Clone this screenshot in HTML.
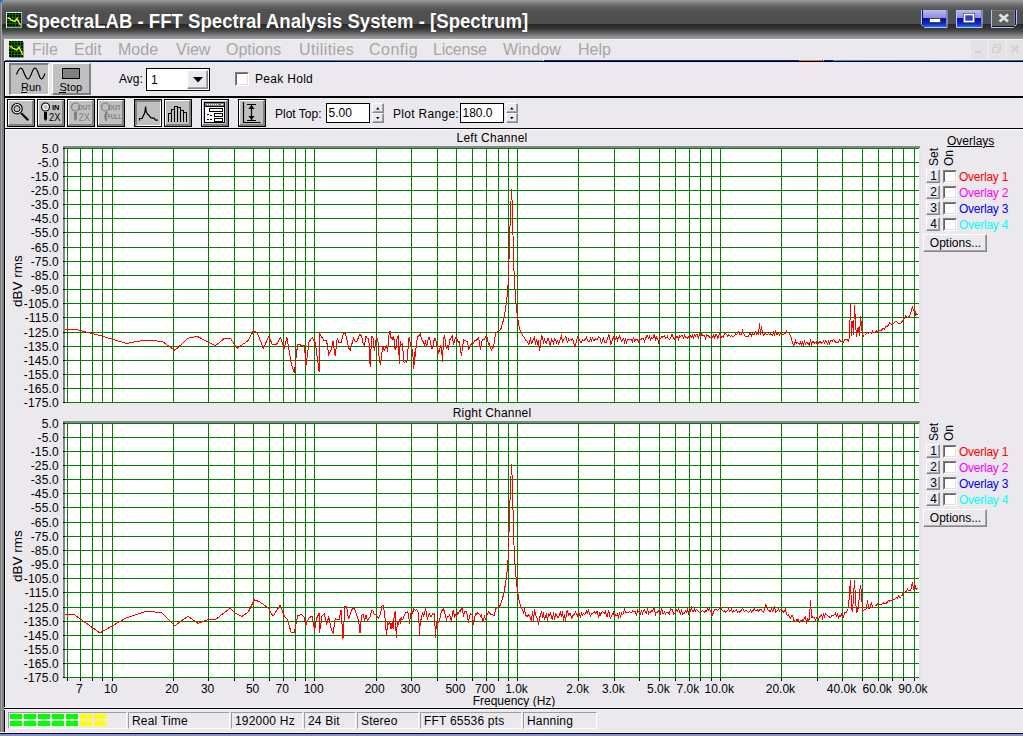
<!DOCTYPE html>
<html><head><meta charset="utf-8"><title>SpectraLAB - FFT Spectral Analysis System - [Spectrum]</title>
<style>
html,body{margin:0;padding:0}
body{width:1023px;height:736px;overflow:hidden;position:relative;background:#ebe9ed;font-family:"Liberation Sans",sans-serif;font-size:12px;color:#000;line-height:14px}
.a{position:absolute}
div,i{box-sizing:border-box}
i{display:block}
#title{left:0;top:0;width:1023px;height:39px;background:linear-gradient(to bottom,#9c9c9c 0px,#8a8a8a 2px,#6c6c6c 5px,#585858 9px,#505050 12px,#505050 24px,#272727 24px,#2c2c2c 26px,#3a3a3a 29px,#555 32px,#7a7a7a 35px,#a2a2a2 39px)}
#ttext{left:26px;top:9px;font:bold 20px/24px "Liberation Sans",sans-serif;color:#fff;white-space:nowrap;transform-origin:0 0;transform:scaleX(.929);text-shadow:0 0 1px rgba(0,0,0,.5)}
#lb0{left:0;top:0;width:1px;height:734px;background:#7c7c7c}
#lb1{left:1px;top:0;width:1px;height:734px;background:#a6a6a6}
#lb2{left:2px;top:39px;width:2px;height:695px;background:#808080}
#menu{left:4px;top:39px;width:1019px;height:21px;background:#ebe9ed;border-top:1px solid #f6f6f9;border-left:1px solid #f6f6f9}
.mi{position:absolute;top:40px;font:16px/20px "Liberation Sans",sans-serif;color:#a6a6a8;white-space:nowrap}
.hl{position:absolute;left:4px;width:1019px}
.yl{position:absolute;left:7px;width:52px;text-align:right;height:14px;line-height:14px;white-space:nowrap;letter-spacing:.2px}
.xl{position:absolute;top:682px;width:60px;text-align:center;height:14px;line-height:14px;white-space:nowrap}
.tb{position:absolute;top:99px;width:28px;height:28px;background:#c0c0c0;border:1px solid #000}
.tb i{position:absolute;left:0;top:0;width:26px;height:26px;border-top:1px solid #fff;border-left:1px solid #fff;border-right:2px solid #808080;border-bottom:2px solid #808080}
.tb.dn i{border-top:2px solid #808080;border-left:2px solid #808080;border-right:1px solid #fff;border-bottom:1px solid #fff}
.tb svg{position:absolute;left:-1px;top:-1px}
.sb{position:absolute;top:712px;height:17px;border-top:1px solid #9d9da1;border-left:1px solid #9d9da1;border-right:1px solid #fff;border-bottom:1px solid #fff;line-height:17px;padding-left:3px;white-space:nowrap;letter-spacing:.2px}
.btn{position:absolute;background:#ebe9ed;border-top:1px solid #fff;border-left:1px solid #fff;border-right:1px solid #85878b;border-bottom:1px solid #85878b;box-shadow:inset -1px -1px 0 #a9a9ad;text-align:center;white-space:nowrap}
.cb{position:absolute;width:14px;height:14px;background:#fff;border-top:1px solid #808080;border-left:1px solid #808080;border-right:1px solid #fff;border-bottom:1px solid #fff}
.cb i{position:absolute;left:0;top:0;width:12px;height:12px;border-top:1px solid #606060;border-left:1px solid #606060;border-right:1px solid #e0e0e0;border-bottom:1px solid #e0e0e0}
.ol{position:absolute;left:959px;white-space:nowrap;letter-spacing:-.25px}
.rot{position:absolute;transform-origin:0 0;transform:rotate(-90deg);white-space:nowrap}
</style></head><body>
<!-- title bar -->
<div id="title" class="a"></div>
<div id="lb0" class="a"></div><div id="lb1" class="a"></div><div id="lb2" class="a"></div>
<svg class="a" style="left:0;top:0" width="6" height="6"><path d="M0 0h3.500L0 3.500z" fill="#1e6fd8"/></svg>
<svg class="a" style="left:6px;top:12px" width="16" height="16" viewBox="0 0 16 16" shape-rendering="crispEdges"><rect width="16" height="16" fill="#e4e4e4"/><rect x="1" y="1" width="15" height="15" fill="#a4a4a4"/><rect x="1" y="1" width="14" height="14" fill="#000"/><path d="M3.500 1v14M6.500 1v14M9.500 1v14M12.500 1v14M1 2.500h14M1 5.500h14M1 8.500h14M1 11.500h14M1 14.500h14" stroke="#006c00" stroke-width="1"/><path d="M1.500 6L4 6.500L5 8L7 8.500L8.500 9.500L10 8L11 6.500L12 9L13.500 11L14.500 13.500" stroke="#ffff00" stroke-width="1.300" fill="none" shape-rendering="auto"/></svg>
<div id="ttext" class="a">SpectraLAB - FFT Spectral Analysis System - [Spectrum]</div>
<!-- caption buttons -->
<svg class="a" style="left:918px;top:8px" width="105" height="22" viewBox="918 8 105 22">
<defs><linearGradient id="gb" x1="0" y1="0" x2="0" y2="1"><stop offset="0" stop-color="#bcbcf0"/><stop offset=".47" stop-color="#8c8ce0"/><stop offset=".48" stop-color="#0c0ca8"/><stop offset=".8" stop-color="#1428c0"/><stop offset="1" stop-color="#1a74ee"/></linearGradient></defs>
<path d="M921.5 10v14.5l3 3h22.5v-17.5" fill="none" stroke="#a8c8ff" stroke-width="1"/>
<rect x="923" y="10" width="23" height="17" fill="url(#gb)"/><rect x="922" y="10" width="1" height="15" fill="#10106a"/>
<rect x="929.5" y="18.500" width="11" height="4" fill="#fff" stroke="#444" stroke-width="1"/>
<path d="M956.5 10v17.500h25.500v-17.5" fill="none" stroke="#a8c8ff" stroke-width="1"/>
<rect x="957" y="10" width="24" height="17" fill="url(#gb)"/>
<rect x="963.5" y="13.500" width="11" height="9" fill="#2a3cc8" stroke="#444" stroke-width="1"/><rect x="964.5" y="14.500" width="9" height="7" fill="none" stroke="#fff" stroke-width="1.6"/>
<path d="M991.5 10v17.500h22l3-3v-14.500" fill="none" stroke="#a8c8ff" stroke-width="1"/>
<rect x="992" y="10" width="23" height="17" fill="#626262"/><rect x="992" y="10" width="23" height="1" fill="#7a7a7a"/><rect x="1014" y="10" width="1" height="16" fill="#808080"/><rect x="1015" y="10" width="1" height="15" fill="#10105a"/><rect x="992" y="26" width="22" height="1" fill="#101010"/>
<path d="M999.500 14.500l8.500 7M1008 14.500l-8.500 7" stroke="#e2e2e2" stroke-width="2.700"/>
</svg>
<!-- menu -->
<div id="menu" class="a"></div>
<svg class="a" style="left:9px;top:41px" width="15" height="17" viewBox="0 0 15 17" shape-rendering="crispEdges"><rect x="1" y="1" width="14" height="16" fill="#909090"/><rect width="14" height="16" fill="#000"/><path d="M2.500 0v16M5.500 0v16M8.500 0v16M11.500 0v16M0 1.500h14M0 4.500h14M0 7.500h14M0 10.500h14M0 13.500h14" stroke="#006c00" stroke-width="1"/><path d="M0.500 5.500L3 6L4 7.500L6 8L7.500 9L9 7.500L10 6L11 8.500L12.500 10.500L13.500 14" stroke="#ffff00" stroke-width="1.300" fill="none" shape-rendering="auto"/></svg>
<div class="mi" style="left:32px">File</div><div class="mi" style="left:74px">Edit</div><div class="mi" style="left:118px">Mode</div><div class="mi" style="left:176px">View</div><div class="mi" style="left:226px">Options</div><div class="mi" style="left:299px;letter-spacing:.4px">Utilities</div><div class="mi" style="left:369px;letter-spacing:.5px">Config</div><div class="mi" style="left:433px;letter-spacing:-.2px">License</div><div class="mi" style="left:503px;letter-spacing:.2px">Window</div><div class="mi" style="left:578px">Help</div>
<!-- mdi buttons -->
<div class="a" style="left:971px;top:40px;width:16px;height:19px;background:#e3e2e6"></div><div class="a" style="left:989px;top:40px;width:16px;height:19px;background:#e3e2e6"></div><div class="a" style="left:1007px;top:40px;width:16px;height:19px;background:#e3e2e6"></div>
<svg class="a" style="left:971px;top:41px" width="52" height="18" viewBox="971 41 52 18"><rect x="975" y="51" width="6" height="2" fill="#d2d1c4"/><path d="M992.500 47.500h6v5h-6zM994.500 47v-2.500h6v5h-2" fill="none" stroke="#d2d1c4" stroke-width="1.200"/><path d="M1011.500 45.500l7 7M1018.500 45.500l-7 7" stroke="#d2d1c4" stroke-width="1.800"/></svg>
<div class="a" style="left:5px;top:60px;width:538px;height:1px;background:linear-gradient(to right,#1c64c4,#2a7cd4 60%,#4aa0e6)"></div><div class="a" style="left:543px;top:60px;width:1px;height:1px;background:#f0f0f4"></div><div class="a" style="left:544px;top:60px;width:255px;height:1px;background:#16269a"></div><div class="a" style="left:799px;top:60px;width:23px;height:1px;background:#e8705e"></div><div class="a" style="left:822px;top:60px;width:1px;height:1px;background:#101040"></div><div class="a" style="left:823px;top:60px;width:1px;height:1px;background:#e8e8f0"></div><div class="a" style="left:824px;top:60px;width:10px;height:1px;background:#16269a"></div><div class="a" style="left:834px;top:60px;width:1px;height:1px;background:#d8d8f0"></div><div class="a" style="left:835px;top:60px;width:188px;height:1px;background:linear-gradient(to right,#3a90e0,#1c6cd0)"></div>
<div class="hl" style="top:61px;height:1px;background:#000"></div>
<!-- toolbar 1 -->
<div class="a" style="left:4px;top:61px;width:1px;height:673px;background:#000"></div><div class="a" style="left:5px;top:62px;width:1px;height:34px;background:#fff"></div><div class="a" style="left:5px;top:98px;width:1px;height:30px;background:#fff"></div>
<div class="a" style="left:9px;top:63px;width:40px;height:32px;background:#c0c0c0;border-top:2px solid #808080;border-left:2px solid #808080;border-right:1px solid #fff;border-bottom:1px solid #fff"></div>
<div class="a" style="left:52px;top:63px;width:39px;height:32px;background:#c0c0c0;border-top:1px solid #fff;border-left:1px solid #fff;border-right:2px solid #808080;border-bottom:2px solid #808080"></div>
<svg class="a" style="left:9px;top:63px" width="82" height="32" viewBox="9 63 82 32"><path d="M16.500 74.500C18 70.500 19.500 68.200 21 68.200C23.500 68.200 25 79 28 79C31 79 32 68.200 35 68.200C38 68.200 39 79 41.500 79C43 79 44 76 45 73.500" fill="none" stroke="#000" stroke-width="1.200"/><rect x="62.500" y="68.500" width="17" height="10" fill="#808080" stroke="#000" stroke-width="1"/><rect x="21" y="92" width="6" height="1" fill="#000" shape-rendering="crispEdges"/><rect x="59" y="92" width="7" height="1" fill="#000" shape-rendering="crispEdges"/></svg>
<div class="a" style="left:21px;top:80px;line-height:14px;font-size:11px">Run</div><div class="a" style="left:59.500px;top:80px;line-height:14px;font-size:11px">Stop</div>
<div class="a" style="left:119px;top:72px">Avg:</div>
<div class="a" style="left:146px;top:68px;width:64px;height:23px;background:#fff;border:1px solid #000"></div>
<div class="a" style="left:151px;top:73px">1</div>
<div class="btn" style="left:187px;top:70px;width:21px;height:19px"></div>
<svg class="a" style="left:192px;top:76px" width="12" height="8"><path d="M1 1h10l-5 5.500z" fill="#000"/></svg>
<div class="cb" style="left:235px;top:72px"><i></i></div>
<div class="a" style="left:255px;top:72px;letter-spacing:.3px">Peak Hold</div>
<div class="hl" style="top:96px;height:2px;background:#000"></div>
<!-- toolbar 2 -->
<div class="tb" style="left:7px"><i></i><svg width="28" height="28" viewBox="0 0 28 28"><circle cx="10" cy="9.700" r="5.200" fill="#fff" stroke="#000" stroke-width="1.200"/><circle cx="10" cy="9.700" r="3.100" fill="#c0c0c0" stroke="#000" stroke-width="1"/><path d="M14.300 14.300l7 7" stroke="#000" stroke-width="2.200"/></svg></div>
<div class="tb" style="left:37px"><i></i><svg width="28" height="28" viewBox="0 0 28 28"><circle cx="8.500" cy="8" r="4" fill="#fff" stroke="#000" stroke-width="1.200"/><circle cx="8.500" cy="8" r="2.300" fill="#c0c0c0"/><path d="M7 13h3v7l-1.500 2l-1.500-2z" fill="#000"/><text x="15" y="11" font-family="Liberation Sans,sans-serif" font-size="7.500" font-weight="bold" fill="#000">IN</text><text x="12" y="22" font-family="Liberation Sans,sans-serif" font-size="11.500" fill="#000" textLength="11.500" lengthAdjust="spacingAndGlyphs">2X</text></svg></div>
<div class="tb" style="left:67px"><i></i><svg width="28" height="28" viewBox="0 0 28 28"><circle cx="8.500" cy="8" r="4" fill="none" stroke="#808080" stroke-width="1.200"/><path d="M7 13h3v7l-1.500 2l-1.500-2z" fill="#808080"/><text x="11" y="11" font-family="Liberation Sans,sans-serif" font-size="7.500" font-weight="bold" fill="#808080" textLength="13" lengthAdjust="spacingAndGlyphs">OUT</text><text x="11.500" y="22" font-family="Liberation Sans,sans-serif" font-size="11.500" fill="#808080" textLength="11.500" lengthAdjust="spacingAndGlyphs">2X</text></svg></div>
<div class="tb" style="left:97px"><i></i><svg width="28" height="28" viewBox="0 0 28 28"><circle cx="8.500" cy="8" r="4" fill="none" stroke="#808080" stroke-width="1.200"/><path d="M9.500 12.500c-2 2-2.500 5-1 9l1.500 0c-1-3-1-6 .5-8z" fill="#808080" stroke="#808080" stroke-width=".8"/><text x="11" y="11" font-family="Liberation Sans,sans-serif" font-size="7.500" font-weight="bold" fill="#808080" textLength="13" lengthAdjust="spacingAndGlyphs">OUT</text><text x="10.500" y="19.500" font-family="Liberation Sans,sans-serif" font-size="7" font-weight="bold" fill="#808080" textLength="14" lengthAdjust="spacingAndGlyphs">FULL</text></svg></div>
<div class="tb dn" style="left:134px"><i></i><svg width="28" height="28" viewBox="0 0 28 28"><path d="M5.500 21.500v-2h2.500l1-2l1.200-2.500l.8-2.500l.6-5l.4 4.500l1 2.500l1.800 1.700l2 2.500l3.500.7l1.400 1.700h2.300" fill="none" stroke="#000" stroke-width="1.200"/></svg></div>
<div class="tb" style="left:164px"><i></i><svg width="28" height="28" viewBox="0 0 28 28" shape-rendering="crispEdges"><path d="M4.500 23v-9h3v9M7.500 14v-4h3v13M10.500 10v-3h3v16M13.500 8h3v15M16.500 11h3v12M19.500 13h3v10" fill="none" stroke="#000" stroke-width="1"/></svg></div>
<div class="tb" style="left:201px"><i></i><svg width="28" height="28" viewBox="0 0 28 28" shape-rendering="crispEdges"><rect x="3.500" y="3.500" width="20" height="20" fill="#fff" stroke="#000" stroke-width="1"/><rect x="4" y="4" width="19" height="3" fill="#808080"/><path d="M6 5.500h12" stroke="#fff" stroke-width="1" stroke-dasharray="1 1"/><rect x="20" y="5" width="2" height="1" fill="#fff"/><rect x="4" y="7" width="19" height="1" fill="#000"/><rect x="8.500" y="9.500" width="13" height="3" fill="#fff" stroke="#000"/><rect x="13.500" y="14.500" width="8" height="3" fill="#fff" stroke="#000"/><rect x="13.500" y="19.500" width="8" height="3" fill="#fff" stroke="#000"/><path d="M6 15.500h2M9 16.500h2M6 20.500h2M9 20.500h2" stroke="#000"/></svg></div>
<div class="tb" style="left:238px"><i></i><svg width="28" height="28" viewBox="0 0 28 28"><path d="M5.500 3v20.500h17" fill="none" stroke="#000" stroke-width="1.200"/><path d="M9 5.500h9M9 21.500h9M13.500 6v15" stroke="#000" stroke-width="1.200" fill="none"/><path d="M13.500 6l-3 4h6zM13.500 21l-3-4h6z" fill="#000"/></svg></div>
<div class="a" style="left:275px;top:107px">Plot Top:</div>
<div class="a" style="left:326px;top:103px;width:44px;height:20px;background:#fff;border:1px solid #000"></div><div class="a" style="left:328.500px;top:106px">5.00</div>
<div class="btn" style="left:372px;top:103px;width:12px;height:10px"></div><div class="btn" style="left:372px;top:113px;width:12px;height:10px"></div>
<svg class="a" style="left:372px;top:103px" width="12" height="20"><path d="M4 6.500h3.600l-1.800-2.200zM4 14h3.600l-1.800 2.200z" fill="#000"/></svg>
<div class="a" style="left:393px;top:107px;letter-spacing:.3px">Plot Range:</div>
<div class="a" style="left:460px;top:103px;width:44px;height:20px;background:#fff;border:1px solid #000"></div><div class="a" style="left:462.500px;top:106px">180.0</div>
<div class="btn" style="left:506px;top:103px;width:12px;height:10px"></div><div class="btn" style="left:506px;top:113px;width:12px;height:10px"></div>
<svg class="a" style="left:506px;top:103px" width="12" height="20"><path d="M4 6.500h3.600l-1.800-2.200zM4 14h3.600l-1.800 2.200z" fill="#000"/></svg>
<div class="hl" style="top:128px;height:1px;background:#000"></div><div class="hl" style="top:129px;height:1px;background:#fbfbfd;left:5px"></div><div class="a" style="left:5px;top:129px;width:1px;height:578px;background:#f6f6f9"></div>
<!-- plots -->
<svg class="plots" width="1023" height="736" viewBox="0 0 1023 736" style="position:absolute;left:0;top:0" shape-rendering="crispEdges"><rect x="65" y="148" width="854" height="255" fill="#fff"/><rect x="919" y="148" width="2" height="257" fill="#e4e3e7"/><rect x="65" y="403" width="854" height="2" fill="#ece6ee"/><rect x="63" y="146" width="857" height="2" fill="#868686"/><rect x="63" y="146" width="2" height="257" fill="#868686"/><path d="M67 148h1v255h-1zM80 148h1v255h-1zM92 148h1v255h-1zM102 148h1v255h-1zM112 148h1v255h-1zM173 148h1v255h-1zM208 148h1v255h-1zM234 148h1v255h-1zM253 148h1v255h-1zM269 148h1v255h-1zM283 148h1v255h-1zM295 148h1v255h-1zM305 148h1v255h-1zM314 148h1v255h-1zM376 148h1v255h-1zM411 148h1v255h-1zM437 148h1v255h-1zM456 148h1v255h-1zM472 148h1v255h-1zM486 148h1v255h-1zM498 148h1v255h-1zM508 148h1v255h-1zM517 148h1v255h-1zM578 148h1v255h-1zM614 148h1v255h-1zM639 148h1v255h-1zM659 148h1v255h-1zM675 148h1v255h-1zM689 148h1v255h-1zM700 148h1v255h-1zM711 148h1v255h-1zM720 148h1v255h-1zM781 148h1v255h-1zM817 148h1v255h-1zM842 148h1v255h-1zM862 148h1v255h-1zM878 148h1v255h-1zM892 148h1v255h-1zM903 148h1v255h-1zM914 148h1v255h-1zM65 148h854v1h-854zM65 162h854v1h-854zM65 176h854v1h-854zM65 190h854v1h-854zM65 204h854v1h-854zM65 218h854v1h-854zM65 232h854v1h-854zM65 247h854v1h-854zM65 261h854v1h-854zM65 275h854v1h-854zM65 289h854v1h-854zM65 303h854v1h-854zM65 317h854v1h-854zM65 332h854v1h-854zM65 346h854v1h-854zM65 360h854v1h-854zM65 374h854v1h-854zM65 388h854v1h-854zM65 402h854v1h-854z" fill="#008000"/><path d="M63 148h2v1h-2zM63 162h2v1h-2zM63 176h2v1h-2zM63 190h2v1h-2zM63 204h2v1h-2zM63 218h2v1h-2zM63 232h2v1h-2zM63 247h2v1h-2zM63 261h2v1h-2zM63 275h2v1h-2zM63 289h2v1h-2zM63 303h2v1h-2zM63 317h2v1h-2zM63 332h2v1h-2zM63 346h2v1h-2zM63 360h2v1h-2zM63 374h2v1h-2zM63 388h2v1h-2zM63 402h2v1h-2z" fill="#000"/><rect x="65" y="423" width="854" height="255" fill="#fff"/><rect x="919" y="423" width="2" height="257" fill="#e4e3e7"/><rect x="65" y="678" width="854" height="2" fill="#ece6ee"/><rect x="63" y="421" width="857" height="2" fill="#868686"/><rect x="63" y="421" width="2" height="257" fill="#868686"/><path d="M67 423h1v255h-1zM80 423h1v255h-1zM92 423h1v255h-1zM102 423h1v255h-1zM112 423h1v255h-1zM173 423h1v255h-1zM208 423h1v255h-1zM234 423h1v255h-1zM253 423h1v255h-1zM269 423h1v255h-1zM283 423h1v255h-1zM295 423h1v255h-1zM305 423h1v255h-1zM314 423h1v255h-1zM376 423h1v255h-1zM411 423h1v255h-1zM437 423h1v255h-1zM456 423h1v255h-1zM472 423h1v255h-1zM486 423h1v255h-1zM498 423h1v255h-1zM508 423h1v255h-1zM517 423h1v255h-1zM578 423h1v255h-1zM614 423h1v255h-1zM639 423h1v255h-1zM659 423h1v255h-1zM675 423h1v255h-1zM689 423h1v255h-1zM700 423h1v255h-1zM711 423h1v255h-1zM720 423h1v255h-1zM781 423h1v255h-1zM817 423h1v255h-1zM842 423h1v255h-1zM862 423h1v255h-1zM878 423h1v255h-1zM892 423h1v255h-1zM903 423h1v255h-1zM914 423h1v255h-1zM65 423h854v1h-854zM65 437h854v1h-854zM65 451h854v1h-854zM65 465h854v1h-854zM65 479h854v1h-854zM65 493h854v1h-854zM65 507h854v1h-854zM65 522h854v1h-854zM65 536h854v1h-854zM65 550h854v1h-854zM65 564h854v1h-854zM65 578h854v1h-854zM65 592h854v1h-854zM65 607h854v1h-854zM65 621h854v1h-854zM65 635h854v1h-854zM65 649h854v1h-854zM65 663h854v1h-854zM65 677h854v1h-854z" fill="#008000"/><path d="M63 423h2v1h-2zM63 437h2v1h-2zM63 451h2v1h-2zM63 465h2v1h-2zM63 479h2v1h-2zM63 493h2v1h-2zM63 507h2v1h-2zM63 522h2v1h-2zM63 536h2v1h-2zM63 550h2v1h-2zM63 564h2v1h-2zM63 578h2v1h-2zM63 592h2v1h-2zM63 607h2v1h-2zM63 621h2v1h-2zM63 635h2v1h-2zM63 649h2v1h-2zM63 663h2v1h-2zM63 677h2v1h-2z" fill="#000"/><path d="M67 678h1v3h-1zM80 678h1v3h-1zM92 678h1v3h-1zM102 678h1v3h-1zM112 678h1v3h-1zM173 678h1v3h-1zM208 678h1v3h-1zM234 678h1v3h-1zM253 678h1v3h-1zM269 678h1v3h-1zM283 678h1v3h-1zM295 678h1v3h-1zM305 678h1v3h-1zM314 678h1v3h-1zM376 678h1v3h-1zM411 678h1v3h-1zM437 678h1v3h-1zM456 678h1v3h-1zM472 678h1v3h-1zM486 678h1v3h-1zM498 678h1v3h-1zM508 678h1v3h-1zM517 678h1v3h-1zM578 678h1v3h-1zM614 678h1v3h-1zM639 678h1v3h-1zM659 678h1v3h-1zM675 678h1v3h-1zM689 678h1v3h-1zM700 678h1v3h-1zM711 678h1v3h-1zM720 678h1v3h-1zM781 678h1v3h-1zM817 678h1v3h-1zM842 678h1v3h-1zM862 678h1v3h-1zM878 678h1v3h-1zM892 678h1v3h-1zM903 678h1v3h-1zM914 678h1v3h-1z" fill="#000"/><polyline points="65.0,329.5 76.5,329.7 100.9,335.8 126.6,343.5 143.9,340.2 152.8,340.2 162.9,342.0 174.9,350.3 188.3,338.1 197.2,336.3 208.7,342.4 215.5,345.7 224.7,338.1 230.8,338.9 237.1,348.3 248.0,340.7 253.6,330.5 257.7,333.8 263.3,348.3 268.9,336.3 272.2,344.5 276.5,344.5 280.6,337.4 284.1,348.3 286.9,337.4 291.3,363.5 294.3,372.9 297.6,344.5 304.5,345.7 306.0,365.6 309.0,341.9 312.3,337.4 315.4,343.2 319.2,372.4 319.5,333.1 322.0,337.5 324.3,340.9 326.6,340.9 328.8,354.8 331.0,350.1 333.1,340.9 335.2,356.3 337.2,338.5 339.2,342.8 341.1,342.3 343.0,334.7 344.9,332.6 346.7,338.6 348.5,347.6 350.2,350.5 351.9,343.9 353.6,338.3 355.3,341.8 356.9,341.4 358.5,337.2 360.0,334.0 361.6,336.1 363.1,343.8 364.5,345.0 366.0,336.4 367.4,338.2 368.8,338.2 370.2,367.3 371.6,336.2 372.9,337.0 374.3,350.8 375.6,341.4 376.9,337.6 378.1,342.4 379.4,361.0 380.6,364.7 381.8,353.7 383.0,346.0 384.2,350.7 385.4,347.7 386.5,345.7 387.7,351.5 388.8,335.9 389.9,330.9 391.0,337.4 392.1,339.4 393.1,336.4 394.2,340.2 395.2,350.3 396.3,346.5 397.3,336.2 398.3,335.9 399.3,363.5 400.3,341.1 401.2,344.9 402.2,344.0 403.2,352.8 404.1,362.6 405.5,361.6 406.9,362.6 407.8,352.3 408.7,338.9 409.5,337.9 410.4,344.5 411.3,348.6 412.5,349.3 413.8,369.0 414.7,351.8 415.5,356.7 416.3,342.7 417.5,337.6 418.7,335.4 419.5,335.0 420.3,333.9 421.5,339.2 422.5,341.1 423.5,341.9 424.5,345.7 425.5,340.2 426.5,346.9 427.5,342.5 428.5,337.8 429.5,337.7 430.5,341.6 431.5,348.9 432.5,348.6 433.5,342.8 434.5,338.4 435.5,338.9 436.5,343.5 437.5,347.7 438.5,352.9 439.5,350.6 440.5,346.1 441.5,348.4 442.5,362.0 443.5,338.3 444.5,336.5 445.5,342.1 446.5,349.1 447.5,345.1 448.5,350.1 449.5,340.1 450.5,339.4 451.5,336.7 452.5,335.6 453.5,345.2 454.5,340.7 455.5,337.7 456.5,337.4 457.5,341.0 458.5,342.0 459.5,341.5 460.5,350.1 461.5,356.0 462.5,347.3 463.5,340.1 464.5,340.9 465.5,340.6 466.5,341.7 467.5,341.7 468.5,349.0 469.5,348.6 470.5,345.5 471.5,343.6 472.5,343.2 473.5,343.0 474.5,341.0 475.5,340.4 476.5,340.1 477.5,339.4 478.5,337.7 479.5,342.6 480.5,350.4 481.5,342.4 482.5,339.5 483.5,339.8 484.5,339.3 485.5,337.0 486.5,335.7 487.5,338.7 488.5,344.3 489.5,343.5 490.5,348.5 491.5,349.8 492.5,348.0 493.5,347.9 494.5,340.0 495.5,334.4 496.5,332.2 497.5,332.4 498.5,330.3 499.5,330.9 500.5,329.5 501.5,327.4 502.5,323.6 503.5,319.6 504.5,315.3 505.5,309.1 506.5,301.8 507.5,292.5 508.5,277.5 509.5,240.3 510.5,212.2 511.5,189.2 512.5,210.0 513.5,259.5 514.5,280.9 515.5,296.3 516.5,308.5 517.5,316.8 518.5,322.8 519.5,328.2 520.5,331.4 521.5,332.8 522.5,335.7 523.5,336.2 524.5,337.9 525.5,340.8 526.5,340.5 527.5,342.1 528.5,344.0 529.5,343.1 530.5,337.2 531.5,344.1 532.5,341.2 533.5,339.3 534.5,337.3 535.5,345.0 536.5,339.5 537.5,343.4 538.5,340.1 539.5,351.4 540.5,344.2 541.5,335.7 542.5,336.8 543.5,342.2 544.5,339.3 545.5,342.5 546.5,343.0 547.5,338.4 548.5,338.3 549.5,344.1 550.5,345.2 551.5,339.1 552.5,340.9 553.5,343.4 554.5,338.9 555.5,339.4 556.5,343.0 557.5,340.8 558.5,343.8 559.5,341.6 560.5,338.6 561.5,335.9 562.5,342.0 563.5,340.0 564.5,338.6 565.5,337.2 566.5,338.2 567.5,343.2 568.5,339.0 569.5,340.6 570.5,339.9 571.5,340.1 572.5,339.1 573.5,341.2 574.5,346.1 575.5,346.1 576.5,340.7 577.5,336.6 578.5,338.2 579.5,339.3 580.5,342.3 581.5,342.7 582.5,339.3 583.5,340.3 584.5,340.4 585.5,338.6 586.5,337.3 587.5,340.1 588.5,341.8 589.5,341.7 590.5,338.3 591.5,342.2 592.5,336.7 593.5,340.7 594.5,340.5 595.5,338.5 596.5,339.9 597.5,340.0 598.5,336.6 599.5,337.2 600.5,339.2 601.5,344.1 602.5,339.6 603.5,338.3 604.5,342.4 605.5,342.4 606.5,342.1 607.5,338.5 608.5,335.1 609.5,336.1 610.5,344.2 611.5,342.8 612.5,339.0 613.5,337.2 614.5,339.6 615.5,339.4 616.5,335.8 617.5,341.1 618.5,339.5 619.5,335.4 620.5,339.4 621.5,340.9 622.5,340.1 623.5,338.5 624.5,342.2 625.5,339.2 626.5,342.8 627.5,339.5 628.5,339.1 629.5,339.1 630.5,339.9 631.5,339.4 632.5,341.7 633.5,336.7 634.5,340.9 635.5,339.9 636.5,339.4 637.5,340.1 638.5,342.1 639.5,339.0 640.5,339.4 641.5,339.0 642.5,338.6 643.5,338.5 644.5,341.4 645.5,339.1 646.5,335.9 647.5,335.7 648.5,337.9 649.5,335.8 650.5,339.6 651.5,337.9 652.5,338.7 653.5,336.6 654.5,333.9 655.5,340.9 656.5,337.0 657.5,338.7 658.5,342.0 659.5,337.9 660.5,338.6 661.5,336.8 662.5,337.0 663.5,336.4 664.5,335.8 665.5,338.3 666.5,337.7 667.5,336.3 668.5,338.9 669.5,339.5 670.5,338.8 671.5,334.6 672.5,334.9 673.5,338.8 674.5,339.6 675.5,336.7 676.5,337.1 677.5,336.4 678.5,339.3 679.5,335.8 680.5,336.4 681.5,335.2 682.5,335.3 683.5,339.3 684.5,334.1 685.5,337.7 686.5,337.4 687.5,338.1 688.5,336.9 689.5,337.1 690.5,335.9 691.5,337.4 692.5,335.1 693.5,337.7 694.5,335.0 695.5,336.1 696.5,334.6 697.5,334.7 698.5,339.2 699.5,333.4 700.5,338.1 701.5,334.0 702.5,335.2 703.5,335.8 704.5,335.4 705.5,338.7 706.5,335.0 707.5,335.4 708.5,335.9 709.5,337.0 710.5,337.5 711.5,337.9 712.5,337.4 713.5,335.2 714.5,338.0 715.5,335.0 716.5,334.5 717.5,338.1 718.5,336.8 719.5,333.5 720.5,337.0 721.5,337.0 722.5,336.8 723.5,337.1 724.5,333.4 725.5,333.4 726.5,334.2 727.5,335.9 728.5,334.9 729.5,335.9 730.5,336.2 731.5,335.3 732.5,336.3 733.5,336.2 734.5,335.8 735.5,333.7 736.5,334.2 737.5,333.9 738.5,331.8 739.5,334.7 740.5,334.9 741.5,334.3 742.5,330.7 743.5,333.6 744.5,335.1 745.5,336.3 746.5,336.2 747.5,336.2 748.5,336.6 749.5,333.2 750.5,333.1 751.5,335.7 752.5,334.0 753.5,334.8 754.5,334.8 755.5,331.9 756.5,333.9 757.5,332.9 758.5,334.3 759.5,323.1 760.5,335.2 761.5,326.0 762.5,333.5 763.5,334.9 764.5,334.0 765.5,333.6 766.5,334.5 767.5,334.5 768.5,333.4 769.5,334.3 770.5,333.9 771.5,334.8 772.5,335.3 773.5,332.3 774.5,335.0 775.5,331.4 776.5,334.7 777.5,334.1 778.5,332.7 779.5,334.9 780.5,333.4 781.5,333.8 782.5,334.2 783.5,334.4 784.5,333.3 785.5,333.1 786.5,331.3 787.5,332.6 788.5,332.4 789.5,334.1 790.5,335.9 791.5,338.8 792.5,343.2 793.5,345.5 794.5,344.5 795.5,340.7 796.5,343.2 797.5,342.7 798.5,343.9 799.5,344.3 800.5,342.2 801.5,344.8 802.5,342.3 803.5,344.8 804.5,341.6 805.5,344.0 806.5,342.5 807.5,342.9 808.5,343.9 809.5,345.2 810.5,338.8 811.5,344.7 812.5,342.1 813.5,341.4 814.5,343.6 815.5,342.9 816.5,341.8 817.5,345.5 818.5,342.2 819.5,342.1 820.5,341.4 821.5,343.4 822.5,342.9 823.5,341.3 824.5,343.3 825.5,341.0 826.5,342.2 827.5,344.3 828.5,341.1 829.5,343.7 830.5,340.6 831.5,340.6 832.5,341.0 833.5,339.5 834.5,340.9 835.5,342.0 836.5,342.0 837.5,342.0 838.5,342.3 839.5,339.8 840.5,341.3 841.5,341.5 842.5,341.7 843.5,342.4 844.5,339.7 845.5,339.1 846.5,339.6 847.5,340.0 848.5,341.2 849.5,337.0 850.5,304.1 851.5,336.0 852.5,321.0 853.5,335.0 854.5,305.4 855.5,322.0 856.5,337.0 857.5,330.0 858.5,327.0 859.5,336.0 860.5,315.9 861.5,326.0 862.5,335.0 863.5,336.2 864.5,335.5 865.5,334.5 866.5,333.7 867.5,332.7 868.5,333.2 869.5,332.3 870.5,332.1 871.5,333.5 872.5,331.1 873.5,332.9 874.5,332.7 875.5,331.8 876.5,331.1 877.5,332.0 878.5,331.6 879.5,330.8 880.5,330.8 881.5,329.9 882.5,328.9 883.5,328.6 884.5,329.0 885.5,326.9 886.5,326.9 887.5,326.0 888.5,325.8 889.5,323.0 890.5,324.0 891.5,324.1 892.5,324.5 893.5,323.6 894.5,322.4 895.5,321.5 896.5,321.1 897.5,322.4 898.5,323.4 899.5,323.3 900.5,323.6 901.5,321.9 902.5,321.1 903.5,319.1 904.5,318.1 905.5,315.6 906.5,316.4 907.5,317.7 908.5,316.9 909.5,316.7 910.5,313.6 911.5,310.3 912.5,306.4 913.5,311.4 914.5,306.9 915.5,315.3 916.5,313.9 917.5,315.0" fill="none" stroke="#ff0000" stroke-width="1" shape-rendering="crispEdges"/><polyline points="65.0,614.4 74.0,614.4 99.9,632.9 126.6,617.7 146.4,611.3 161.7,612.6 174.9,625.8 187.8,616.2 198.0,623.3 208.2,619.5 215.5,619.5 230.3,608.0 235.3,613.1 242.0,616.4 248.0,612.4 254.4,599.9 259.5,601.7 268.4,608.0 273.0,616.2 280.1,605.5 284.1,615.7 287.4,619.5 291.3,632.9 294.3,632.9 297.6,615.7 301.4,614.4 304.0,616.9 306.0,624.6 309.0,617.7 312.3,616.2 314.6,630.9 316.7,618.2 319.2,613.1 319.5,632.9 322.0,616.1 324.3,613.6 326.6,624.8 328.8,616.5 331.0,627.9 333.1,633.5 335.2,618.9 337.2,620.0 339.2,619.2 341.1,609.8 343.0,638.6 344.9,606.5 346.7,606.9 348.5,619.3 350.2,614.3 351.9,609.4 353.6,608.2 355.3,610.1 356.9,615.8 358.5,619.9 360.0,632.9 361.6,615.1 363.1,614.4 364.5,620.5 366.0,615.0 367.4,620.3 368.8,618.4 370.2,616.5 371.6,610.6 372.9,611.1 374.3,614.6 375.6,614.7 376.9,615.7 378.1,618.6 379.4,616.7 380.6,613.3 381.8,606.5 383.0,605.1 384.2,611.1 385.4,621.3 386.5,636.0 387.7,622.9 388.8,624.5 389.9,621.8 391.0,629.2 392.1,622.3 393.1,628.9 394.2,616.1 395.2,611.4 396.3,638.0 397.3,621.9 398.3,623.5 399.3,619.8 400.3,622.3 401.2,617.5 402.2,619.9 403.2,618.7 404.1,616.1 405.5,612.9 406.9,612.6 407.8,611.5 408.7,616.3 409.5,624.1 410.4,615.9 411.3,611.8 412.5,613.1 413.8,608.9 414.7,609.8 415.5,610.7 416.3,609.5 417.5,610.3 418.7,614.8 419.5,636.0 420.3,620.8 421.5,618.6 422.5,612.4 423.5,615.6 424.5,613.6 425.5,608.1 426.5,613.2 427.5,619.7 428.5,614.7 429.5,613.8 430.5,615.9 431.5,616.6 432.5,613.5 433.5,614.6 434.5,613.8 435.5,638.0 436.5,621.6 437.5,624.1 438.5,622.0 439.5,620.7 440.5,615.2 441.5,611.5 442.5,609.5 443.5,608.8 444.5,612.0 445.5,616.3 446.5,619.5 447.5,616.9 448.5,616.6 449.5,615.1 450.5,617.2 451.5,622.2 452.5,611.9 453.5,610.7 454.5,616.8 455.5,614.8 456.5,617.0 457.5,612.8 458.5,613.6 459.5,611.0 460.5,611.1 461.5,608.2 462.5,608.4 463.5,616.8 464.5,611.7 465.5,611.6 466.5,611.8 467.5,616.7 468.5,622.9 469.5,616.3 470.5,613.7 471.5,614.5 472.5,615.9 473.5,624.6 474.5,618.6 475.5,614.0 476.5,614.4 477.5,612.9 478.5,613.6 479.5,614.1 480.5,616.6 481.5,615.2 482.5,620.0 483.5,620.3 484.5,616.3 485.5,618.9 486.5,616.5 487.5,613.8 488.5,611.8 489.5,613.0 490.5,614.1 491.5,614.4 492.5,614.7 493.5,615.5 494.5,615.6 495.5,608.7 496.5,608.6 497.5,607.6 498.5,605.7 499.5,606.1 500.5,605.3 501.5,601.2 502.5,598.7 503.5,594.6 504.5,589.5 505.5,583.7 506.5,577.1 507.5,568.1 508.5,551.6 509.5,514.6 510.5,487.4 511.5,464.2 512.5,484.9 513.5,533.9 514.5,556.6 515.5,572.1 516.5,582.4 517.5,591.6 518.5,597.3 519.5,602.1 520.5,605.9 521.5,608.9 522.5,609.4 523.5,612.2 524.5,609.3 525.5,614.5 526.5,616.4 527.5,616.4 528.5,614.9 529.5,615.5 530.5,618.8 531.5,621.5 532.5,611.4 533.5,620.7 534.5,609.2 535.5,614.4 536.5,616.9 537.5,619.7 538.5,625.0 539.5,616.9 540.5,616.1 541.5,610.6 542.5,616.5 543.5,613.9 544.5,620.0 545.5,615.6 546.5,614.3 547.5,621.2 548.5,613.9 549.5,615.0 550.5,613.3 551.5,617.0 552.5,619.8 553.5,612.4 554.5,619.5 555.5,613.8 556.5,614.9 557.5,617.0 558.5,617.6 559.5,614.5 560.5,612.0 561.5,616.8 562.5,611.1 563.5,621.0 564.5,614.5 565.5,621.3 566.5,612.5 567.5,610.7 568.5,615.3 569.5,613.7 570.5,613.8 571.5,618.0 572.5,616.8 573.5,614.1 574.5,614.1 575.5,612.0 576.5,614.0 577.5,616.0 578.5,612.6 579.5,613.9 580.5,617.4 581.5,612.7 582.5,614.9 583.5,613.5 584.5,614.8 585.5,613.8 586.5,611.2 587.5,612.9 588.5,609.3 589.5,613.8 590.5,616.0 591.5,613.6 592.5,613.3 593.5,612.9 594.5,611.7 595.5,613.4 596.5,611.7 597.5,611.6 598.5,617.9 599.5,613.3 600.5,614.8 601.5,612.2 602.5,611.3 603.5,612.6 604.5,613.3 605.5,611.2 606.5,616.7 607.5,616.2 608.5,610.3 609.5,614.2 610.5,619.4 611.5,615.1 612.5,614.6 613.5,611.6 614.5,617.7 615.5,614.4 616.5,615.6 617.5,613.8 618.5,618.5 619.5,612.1 620.5,617.8 621.5,612.8 622.5,614.5 623.5,613.8 624.5,608.6 625.5,612.4 626.5,612.3 627.5,612.6 628.5,612.7 629.5,611.8 630.5,612.4 631.5,612.8 632.5,610.6 633.5,611.4 634.5,612.0 635.5,611.9 636.5,615.9 637.5,610.0 638.5,611.8 639.5,611.4 640.5,615.0 641.5,609.9 642.5,613.2 643.5,610.7 644.5,609.6 645.5,612.3 646.5,613.3 647.5,608.2 648.5,613.9 649.5,612.5 650.5,612.1 651.5,610.7 652.5,611.1 653.5,608.8 654.5,608.5 655.5,614.8 656.5,613.5 657.5,611.7 658.5,610.5 659.5,613.3 660.5,614.5 661.5,607.7 662.5,613.1 663.5,613.4 664.5,612.1 665.5,613.8 666.5,612.6 667.5,612.7 668.5,612.8 669.5,613.9 670.5,608.9 671.5,609.5 672.5,609.1 673.5,614.6 674.5,613.3 675.5,612.9 676.5,609.9 677.5,611.4 678.5,608.9 679.5,611.2 680.5,613.8 681.5,610.4 682.5,614.2 683.5,613.9 684.5,613.4 685.5,610.5 686.5,612.1 687.5,609.6 688.5,613.4 689.5,611.3 690.5,611.0 691.5,607.8 692.5,611.8 693.5,611.9 694.5,609.1 695.5,611.0 696.5,609.5 697.5,610.5 698.5,611.6 699.5,612.7 700.5,611.2 701.5,611.2 702.5,610.6 703.5,611.3 704.5,612.3 705.5,610.7 706.5,611.7 707.5,608.8 708.5,610.4 709.5,608.6 710.5,610.9 711.5,612.3 712.5,614.7 713.5,612.3 714.5,610.1 715.5,609.1 716.5,609.3 717.5,610.6 718.5,609.7 719.5,608.6 720.5,606.1 721.5,609.7 722.5,610.1 723.5,611.7 724.5,610.8 725.5,612.1 726.5,611.6 727.5,610.9 728.5,608.4 729.5,611.8 730.5,610.8 731.5,609.2 732.5,612.2 733.5,610.8 734.5,611.6 735.5,610.7 736.5,609.9 737.5,612.5 738.5,611.3 739.5,612.0 740.5,610.9 741.5,610.1 742.5,608.0 743.5,610.6 744.5,611.1 745.5,610.6 746.5,610.6 747.5,611.9 748.5,612.2 749.5,611.4 750.5,610.2 751.5,611.9 752.5,611.1 753.5,610.3 754.5,608.9 755.5,610.6 756.5,610.8 757.5,609.7 758.5,611.1 759.5,609.7 760.5,609.9 761.5,609.5 762.5,611.9 763.5,612.5 764.5,610.2 765.5,603.7 766.5,607.0 767.5,609.3 768.5,610.4 769.5,611.1 770.5,611.3 771.5,608.2 772.5,611.2 773.5,610.5 774.5,605.6 775.5,612.0 776.5,611.4 777.5,610.8 778.5,609.1 779.5,611.2 780.5,609.1 781.5,609.4 782.5,610.8 783.5,612.4 784.5,611.6 785.5,609.3 786.5,614.8 787.5,615.7 788.5,614.4 789.5,617.2 790.5,618.3 791.5,616.1 792.5,615.4 793.5,619.2 794.5,621.6 795.5,621.4 796.5,620.0 797.5,620.1 798.5,619.5 799.5,622.1 800.5,620.4 801.5,621.0 802.5,620.1 803.5,620.9 804.5,617.9 805.5,616.5 806.5,623.5 807.5,618.7 808.5,620.3 809.5,619.1 810.5,599.6 811.5,617.7 812.5,616.9 813.5,617.2 814.5,617.6 815.5,620.5 816.5,617.6 817.5,617.1 818.5,619.3 819.5,616.9 820.5,616.2 821.5,614.6 822.5,617.9 823.5,614.6 824.5,616.6 825.5,613.4 826.5,614.8 827.5,615.3 828.5,616.7 829.5,616.9 830.5,617.7 831.5,616.1 832.5,615.3 833.5,615.7 834.5,614.8 835.5,613.1 836.5,616.2 837.5,614.4 838.5,617.8 839.5,616.0 840.5,616.7 841.5,614.4 842.5,616.3 843.5,617.1 844.5,612.3 845.5,612.3 846.5,612.3 847.5,609.1 848.5,608.5 849.5,591.4 850.5,580.4 851.5,608.0 852.5,612.0 853.5,596.0 854.5,580.4 855.5,598.0 856.5,613.0 857.5,610.0 858.5,607.0 859.5,592.7 860.5,585.2 861.5,592.7 862.5,610.0 863.5,610.7 864.5,609.7 865.5,609.1 866.5,608.9 867.5,600.2 868.5,608.0 869.5,608.3 870.5,605.9 871.5,602.4 872.5,607.0 873.5,607.2 874.5,606.5 875.5,605.5 876.5,605.7 877.5,603.4 878.5,603.7 879.5,604.7 880.5,604.2 881.5,604.4 882.5,603.4 883.5,603.0 884.5,603.1 885.5,603.6 886.5,603.0 887.5,602.0 888.5,600.4 889.5,601.1 890.5,600.3 891.5,600.4 892.5,599.3 893.5,599.9 894.5,599.7 895.5,598.8 896.5,597.5 897.5,598.5 898.5,596.1 899.5,597.2 900.5,597.6 901.5,596.5 902.5,594.7 903.5,592.3 904.5,592.6 905.5,591.6 906.5,591.3 907.5,589.1 908.5,590.8 909.5,590.7 910.5,590.4 911.5,586.9 912.5,581.8 913.5,589.8 914.5,581.7 915.5,587.6 916.5,589.2 917.5,588.1" fill="none" stroke="#ff0000" stroke-width="1" shape-rendering="crispEdges"/></svg>
<div class="yl" style="top:141.5px">5.0</div><div class="yl" style="top:155.5px">-5.0</div><div class="yl" style="top:169.5px">-15.0</div><div class="yl" style="top:183.5px">-25.0</div><div class="yl" style="top:197.5px">-35.0</div><div class="yl" style="top:211.5px">-45.0</div><div class="yl" style="top:225.5px">-55.0</div><div class="yl" style="top:240.5px">-65.0</div><div class="yl" style="top:254.5px">-75.0</div><div class="yl" style="top:268.5px">-85.0</div><div class="yl" style="top:282.5px">-95.0</div><div class="yl" style="top:296.5px">-105.0</div><div class="yl" style="top:310.5px">-115.0</div><div class="yl" style="top:325.5px">-125.0</div><div class="yl" style="top:339.5px">-135.0</div><div class="yl" style="top:353.5px">-145.0</div><div class="yl" style="top:367.5px">-155.0</div><div class="yl" style="top:381.5px">-165.0</div><div class="yl" style="top:395.5px">-175.0</div><div class="yl" style="top:416.5px">5.0</div><div class="yl" style="top:430.5px">-5.0</div><div class="yl" style="top:444.5px">-15.0</div><div class="yl" style="top:458.5px">-25.0</div><div class="yl" style="top:472.5px">-35.0</div><div class="yl" style="top:486.5px">-45.0</div><div class="yl" style="top:500.5px">-55.0</div><div class="yl" style="top:515.5px">-65.0</div><div class="yl" style="top:529.5px">-75.0</div><div class="yl" style="top:543.5px">-85.0</div><div class="yl" style="top:557.5px">-95.0</div><div class="yl" style="top:571.5px">-105.0</div><div class="yl" style="top:585.5px">-115.0</div><div class="yl" style="top:600.5px">-125.0</div><div class="yl" style="top:614.5px">-135.0</div><div class="yl" style="top:628.5px">-145.0</div><div class="yl" style="top:642.5px">-155.0</div><div class="yl" style="top:656.5px">-165.0</div><div class="yl" style="top:670.5px">-175.0</div><div class="xl" style="left:49.4px">7</div><div class="xl" style="left:80.8px">10</div><div class="xl" style="left:141.9px">20</div><div class="xl" style="left:177.6px">30</div><div class="xl" style="left:222.6px">50</div><div class="xl" style="left:252.2px">70</div><div class="xl" style="left:283.7px">100</div><div class="xl" style="left:344.7px">200</div><div class="xl" style="left:380.4px">300</div><div class="xl" style="left:425.4px">500</div><div class="xl" style="left:455.1px">700</div><div class="xl" style="left:486.5px">1.0k</div><div class="xl" style="left:547.6px">2.0k</div><div class="xl" style="left:583.3px">3.0k</div><div class="xl" style="left:628.3px">5.0k</div><div class="xl" style="left:657.9px">7.0k</div><div class="xl" style="left:689.3px">10.0k</div><div class="xl" style="left:750.4px">20.0k</div><div class="xl" style="left:811.5px">40.0k</div><div class="xl" style="left:847.2px">60.0k</div><div class="xl" style="left:882.9px">90.0k</div>
<div class="a" style="left:392px;top:131px;width:200px;text-align:center;letter-spacing:.25px">Left Channel</div>
<div class="a" style="left:392px;top:406px;width:200px;text-align:center;letter-spacing:.2px">Right Channel</div>
<div class="a" style="left:414px;top:694px;width:200px;text-align:center">Frequency (Hz)</div>
<div class="rot" style="left:10px;top:307px;font-size:13.5px;line-height:15px">dBV rms</div>
<div class="rot" style="left:10px;top:582px;font-size:13.5px;line-height:15px">dBV rms</div>
<!-- overlays -->
<div class="a" style="left:947px;top:134px;text-decoration:underline">Overlays</div>
<div class="rot" style="left:927px;top:166px">Set</div><div class="rot" style="left:942px;top:166px">On</div>
<div class="btn" style="left:926px;top:169px;width:14px;height:14px;line-height:12px;padding-left:1px">1</div><div class="cb" style="left:943px;top:170px;height:13px"><i style="height:11px"></i></div><div class="ol" style="top:170px;color:#ff0000">Overlay 1</div>
<div class="btn" style="left:926px;top:185px;width:14px;height:14px;line-height:12px;padding-left:1px">2</div><div class="cb" style="left:943px;top:186px;height:13px"><i style="height:11px"></i></div><div class="ol" style="top:186px;color:#ff00ff">Overlay 2</div>
<div class="btn" style="left:926px;top:201px;width:14px;height:14px;line-height:12px;padding-left:1px">3</div><div class="cb" style="left:943px;top:202px;height:13px"><i style="height:11px"></i></div><div class="ol" style="top:202px;color:#0000ff">Overlay 3</div>
<div class="btn" style="left:926px;top:217px;width:14px;height:14px;line-height:12px;padding-left:1px">4</div><div class="cb" style="left:943px;top:218px;height:13px"><i style="height:11px"></i></div><div class="ol" style="top:218px;color:#00ffff">Overlay 4</div>
<div class="btn" style="left:923px;top:234px;width:64px;height:18px;line-height:16px;padding-left:1px">Options...</div>
<div class="rot" style="left:927px;top:441px">Set</div><div class="rot" style="left:942px;top:441px">On</div>
<div class="btn" style="left:926px;top:444px;width:14px;height:14px;line-height:12px;padding-left:1px">1</div><div class="cb" style="left:943px;top:445px;height:13px"><i style="height:11px"></i></div><div class="ol" style="top:445px;color:#ff0000">Overlay 1</div>
<div class="btn" style="left:926px;top:460px;width:14px;height:14px;line-height:12px;padding-left:1px">2</div><div class="cb" style="left:943px;top:461px;height:13px"><i style="height:11px"></i></div><div class="ol" style="top:461px;color:#ff00ff">Overlay 2</div>
<div class="btn" style="left:926px;top:476px;width:14px;height:14px;line-height:12px;padding-left:1px">3</div><div class="cb" style="left:943px;top:477px;height:13px"><i style="height:11px"></i></div><div class="ol" style="top:477px;color:#0000ff">Overlay 3</div>
<div class="btn" style="left:926px;top:492px;width:14px;height:14px;line-height:12px;padding-left:1px">4</div><div class="cb" style="left:943px;top:493px;height:13px"><i style="height:11px"></i></div><div class="ol" style="top:493px;color:#00ffff">Overlay 4</div>
<div class="btn" style="left:923px;top:509px;width:64px;height:18px;line-height:16px;padding-left:1px">Options...</div>
<!-- status bar -->
<div class="hl" style="top:707px;height:1px;background:#f6f6f9"></div>
<div class="hl" style="top:708px;height:1px;background:#000"></div>
<div class="hl" style="top:709px;height:1px;background:#f6f6f9"></div>

<div class="sb" style="left:8px;width:119px"></div>
<svg class="a" style="left:10px;top:714px" width="100" height="13" shape-rendering="crispEdges"><path d="M0 0h12v5h-12zM14 0h12v5h-12zM28 0h12v5h-12zM42 0h12v5h-12zM56 0h12v5h-12zM0 7h12v5h-12zM14 7h12v5h-12zM28 7h12v5h-12zM42 7h12v5h-12zM56 7h12v5h-12z" fill="#00ff00"/><path d="M70 0h12v5h-12zM84 0h12v5h-12zM70 7h12v5h-12zM84 7h12v5h-12z" fill="#ffff00"/></svg>
<div class="sb" style="left:128px;width:102px">Real Time</div>
<div class="sb" style="left:231px;width:72px">192000 Hz</div>
<div class="sb" style="left:304px;width:52px">24 Bit</div>
<div class="sb" style="left:357px;width:62px">Stereo</div>
<div class="sb" style="left:420px;width:102px">FFT 65536 pts</div>
<div class="sb" style="left:523px;width:74px">Hanning</div>
<div class="a" style="left:0;top:732px;width:1023px;height:1px;background:#f6f6f9"></div>
<div class="a" style="left:0;top:733px;width:1023px;height:1px;background:#000"></div>
<div class="a" style="left:0;top:734px;width:1023px;height:2px;background:#8590d8"></div>
</body></html>
